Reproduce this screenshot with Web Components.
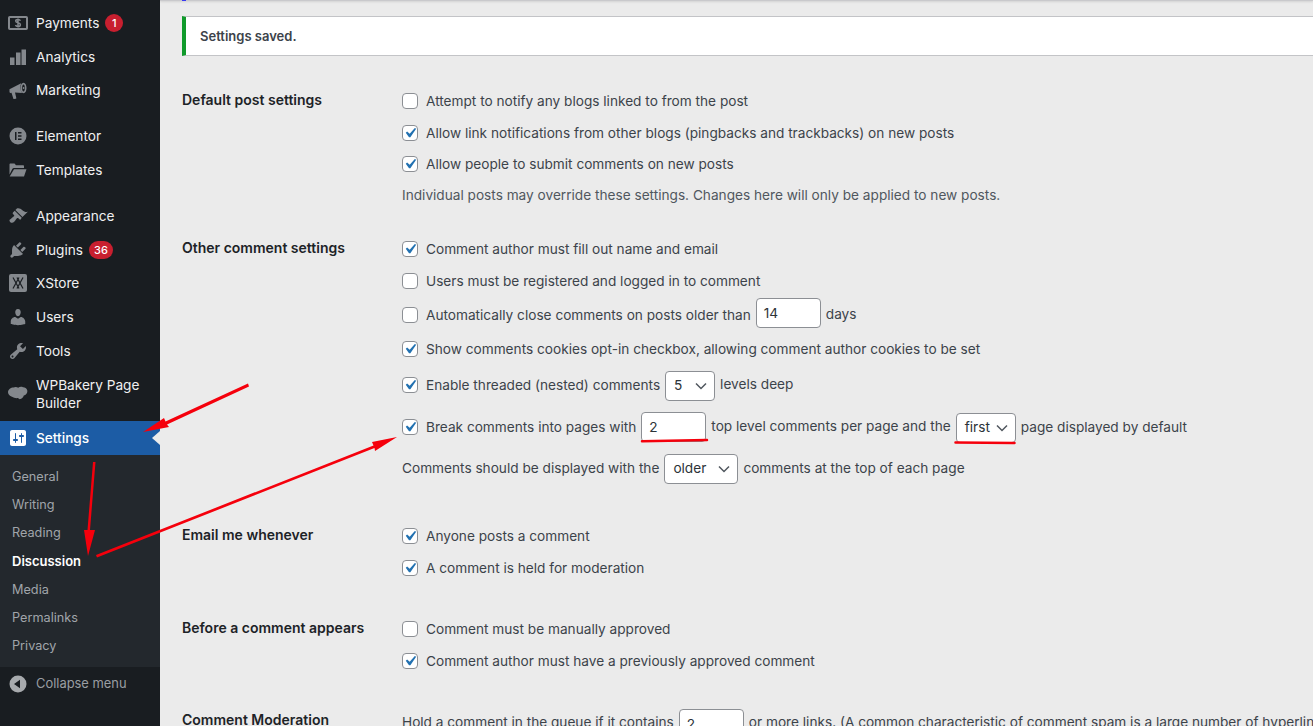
<!DOCTYPE html>
<html lang="en">
<head>
<meta charset="utf-8">
<title>Discussion Settings</title>
<style>
  html, body { margin: 0; height: 100%; overflow: hidden; background: #ebebeb; }
  body { font: 13.650px/1.4 Inter, "Liberation Sans", sans-serif; color: #3c434a; }
  .up { margin-bottom: 2px; }
  .up-field { margin-bottom: 6px; }
  .down-field { margin-top: 2px; }
</style>
</head>
<body>

<wp-admin>
  <wp-sidebar slot="side">
    <wp-menu-item icon="payments" badge="1">Payments</wp-menu-item>
    <wp-menu-item icon="analytics">Analytics</wp-menu-item>
    <wp-menu-item icon="marketing">Marketing</wp-menu-item>
    <wp-menu-sep></wp-menu-sep>
    <wp-menu-item icon="elementor">Elementor</wp-menu-item>
    <wp-menu-item icon="templates">Templates</wp-menu-item>
    <wp-menu-sep></wp-menu-sep>
    <wp-menu-item icon="appearance">Appearance</wp-menu-item>
    <wp-menu-item icon="plugins" badge="36">Plugins</wp-menu-item>
    <wp-menu-item icon="xstore">XStore</wp-menu-item>
    <wp-menu-item icon="users">Users</wp-menu-item>
    <wp-menu-item icon="tools">Tools</wp-menu-item>
    <wp-menu-item icon="bakery" tall>WPBakery Page Builder</wp-menu-item>
    <wp-menu-item icon="settings" current>Settings</wp-menu-item>
    <wp-submenu>
      <wp-submenu-item>General</wp-submenu-item>
      <wp-submenu-item>Writing</wp-submenu-item>
      <wp-submenu-item>Reading</wp-submenu-item>
      <wp-submenu-item current>Discussion</wp-submenu-item>
      <wp-submenu-item>Media</wp-submenu-item>
      <wp-submenu-item>Permalinks</wp-submenu-item>
      <wp-submenu-item>Privacy</wp-submenu-item>
    </wp-submenu>
    <wp-menu-item icon="collapse" dim>Collapse menu</wp-menu-item>
  </wp-sidebar>

  <wp-notice>Settings saved.</wp-notice>

  <wp-section label="Default post settings" style="margin-top:29px">
    <wp-line box>Attempt to notify any blogs linked to from the post</wp-line>
    <wp-line box checked>Allow link notifications from other blogs (pingbacks and trackbacks) on new posts</wp-line>
    <wp-line box checked style="--h:30px">Allow people to submit comments on new posts</wp-line>
    <wp-line style="--h:31px;--c:#50575e">Individual posts may override these settings. Changes here will only be applied to new posts.</wp-line>
  </wp-section>

  <wp-section label="Other comment settings" style="margin-top:23px">
    <wp-line box checked>Comment author must fill out name and email</wp-line>
    <wp-line box>Users must be registered and logged in to comment</wp-line>
    <wp-line box style="--h:36px">Automatically close comments on posts older than <wp-field w="65" class="up-field">14</wp-field> <span class="up">days</span></wp-line>
    <wp-line box checked>Show comments cookies opt-in checkbox, allowing comment author cookies to be set</wp-line>
    <wp-line box checked style="--h:40px">Enable threaded (nested) comments <wp-select w="50">5</wp-select> <span class="up">levels deep</span></wp-line>
    <wp-line box checked style="--h:44px">Break comments into pages with <wp-field w="65" class="up">2</wp-field> <span class="up">top level comments per page and the</span> <wp-select w="60">first</wp-select> page displayed by default</wp-line>
    <wp-line style="--h:38px">Comments should be displayed with the <wp-select w="74">older</wp-select> comments at the top of each page</wp-line>
  </wp-section>

  <wp-section label="Email me whenever" style="margin-top:33px">
    <wp-line box checked>Anyone posts a comment</wp-line>
    <wp-line box checked>A comment is held for moderation</wp-line>
  </wp-section>

  <wp-section label="Before a comment appears" style="margin-top:29px">
    <wp-line box>Comment must be manually approved</wp-line>
    <wp-line box checked>Comment author must have a previously approved comment</wp-line>
  </wp-section>

  <wp-section label="Comment Moderation" style="margin-top:25px;--label-top:3px">
    <wp-line style="--h:40px">Hold a comment in the queue if it contains <wp-field w="65" class="down-field">2</wp-field> or more links. (A common characteristic of comment spam is a large number of hyperlinks.)</wp-line>
  </wp-section>

  <wp-annotations slot="over"></wp-annotations>
</wp-admin>

<script>
const ICONS = {
  payments: `<svg viewBox="0 0 20 14" style="height:14px"><rect x="1" y="1" width="18" height="12" rx=".8" fill="none" stroke="currentColor" stroke-width="2"/><path d="M12.400 4.800c-.3-.8-1.200-1.300-2.400-1.300-1.300 0-2.300.6-2.300 1.600 0 2.300 4.700 1.100 4.700 3.600 0 1.100-1.100 1.800-2.400 1.800-1.200 0-2.200-.5-2.500-1.400M10 2.400v9.200" fill="none" stroke="currentColor" stroke-width="1.500"/></svg>`,
  analytics: `<svg viewBox="0 0 20 20"><path d="M2 10.500h4.500V18H2zM8 5.500h4.500V18H8zM13.500 2.500H18V18h-4.500z" fill="currentColor"/></svg>`,
  marketing: `<svg viewBox="0 0 20 20"><path fill="currentColor" d="M1.500 9.300 13.200 3.300c-1.200 2.400-1.100 7 .9 9.700L7 12.400l1.300 5.600c.1.400-.1.600-.5.700l-1.800.3c-.4.1-.6-.1-.7-.5L3.500 12.800l-1 .1c-.6.1-1-.2-1-.8z"/><path fill="currentColor" fill-rule="evenodd" d="M15.500 2.800c1.800 0 3 2.300 3 5.200s-1.200 5.200-3 5.200-3-2.300-3-5.200 1.200-5.200 3-5.200zm0 1.700c-.8 0-1.400 1.600-1.400 3.500s.6 3.500 1.400 3.500 1.400-1.600 1.400-3.500-.6-3.500-1.400-3.500z"/><circle cx="15.600" cy="8" r=".9" fill="currentColor"/></svg>`,
  elementor: `<svg viewBox="0 0 20 20"><path fill="currentColor" fill-rule="evenodd" d="M10 1.500a8.500 8.500 0 1 0 0 17 8.500 8.500 0 0 0 0-17zM7 6h1.500v8H7zm3 0h3.500v1.500H10zm0 3.250h3.500v1.500H10zm0 3.250h3.500V14H10z"/></svg>`,
  templates: `<svg viewBox="0 0 20 20"><path fill="currentColor" d="M1.500 4.500c0-.6.400-1 1-1h4l1.500 1.800h7c.6 0 1 .4 1 1V8H6c-.8 0-1.400.4-1.700 1.100L1.500 14.500z"/><path fill="currentColor" d="M6 9.200h12.500L16 16.500H1.700z"/></svg>`,
  appearance: `<svg viewBox="0 0 20 20"><path fill="currentColor" d="M14.480 11.060 7.410 3.990l1.500-1.500c.5-.56 2.300-.47 3.510.32 1.210.8 1.430 1.280 2.910 2.100 1.180.64 2.450 1.260 4.450.85zm-.71.71L6.700 4.700 4.930 6.470c-.39.39-.39 1.020 0 1.410l1.060 1.060c.39.39.39 1.030 0 1.420-.6.6-1.430 1.110-2.210 1.690-.35.26-.7.53-1.010.84C1.430 13.230 1 14.530 2.100 15.900c.1.100.2.2.3.3 1.370 1.100 2.670.67 4.010-.67.31-.31.58-.66.84-1.010.58-.78 1.090-1.610 1.690-2.210.39-.39 1.030-.39 1.420 0l1.060 1.060c.39.39 1.020.39 1.410 0z"/></svg>`,
  plugins: `<svg viewBox="0 0 20 20"><path fill="currentColor" d="M13.110 4.360 9.870 7.600 8 5.730l3.240-3.240c.35-.34 1.050-.2 1.560.32.52.51.66 1.210.31 1.550zm-8 1.770.91-1.120 9.010 9.010-1.190.84c-.71.71-2.630 1.160-3.820 1.160H6.140L4.900 17.260c-.59.59-1.540.59-2.120 0-.59-.58-.59-1.530 0-2.120l1.240-1.240v-3.880c0-1.130.4-3.190 1.090-3.890zm7.260 3.970 3.240-3.240c.34-.35 1.040-.21 1.550.31.52.51.66 1.210.31 1.550l-3.240 3.250z"/></svg>`,
  xstore: `<svg viewBox="0 0 20 20"><rect x="1" y="1" width="18" height="18" rx="2" fill="currentColor"/><path d="M5 4.500l6 11M11 4.500l-6 11M9 4.500l6 11M15 4.500l-6 11" stroke="#1a1e22" stroke-width="1.200" fill="none"/></svg>`,
  users: `<svg viewBox="0 0 20 20"><path fill="currentColor" d="M10 9.250c-2.270 0-2.730-3.440-2.730-3.440C7 4.020 7.820 2 9.970 2c2.160 0 2.980 2.020 2.710 3.810 0 0-.41 3.440-2.680 3.440zm0 2.570L12.720 10c2.390 0 4.520 2.330 4.520 4.530v2.490s-3.650 1.130-7.240 1.130c-3.650 0-7.240-1.130-7.240-1.130v-2.490c0-2.250 1.940-4.480 4.470-4.480z"/></svg>`,
  tools: `<svg viewBox="0 0 20 20"><path fill="currentColor" d="M16.680 9.770c-1.340 1.340-3.300 1.670-4.950.99l-5.410 6.520c-.99.99-2.590.99-3.580 0s-.99-2.59 0-3.570l6.520-5.420c-.68-1.650-.35-3.610.99-4.950 1.280-1.280 3.120-1.620 4.720-1.060l-2.890 2.890 2.820 2.820 2.860-2.870c.53 1.580.18 3.390-1.080 4.650zM3.810 16.210c.4.390 1.040.39 1.430 0 .4-.4.4-1.040 0-1.430-.39-.4-1.030-.4-1.430 0-.39.39-.39 1.030 0 1.430z"/></svg>`,
  bakery: `<svg viewBox="0 0 20 20"><path fill="currentColor" d="M5.500 3.500c1.500-.8 3.300-.7 4.700.2 1.300-1 3.200-1.200 4.800-.5 1.300-.2 3.800.9 4.300 3.300.4 2.400-1.300 4.500-3.500 4.900-.5 1.800-1.800 3-3.300 3.600-.9.400-1.800-.1-2.500-.9-2.200.3-4.400-.2-6-1.300C1.500 12-.1 10.200 0 7.900.2 5.500 2.800 3.500 5.500 3.500z"/></svg>`,
  settings: `<svg viewBox="0 0 20 20"><path fill="currentColor" d="M18 16V4c0-1.100-.9-2-2-2H4c-1.100 0-2 .9-2 2v12c0 1.100.9 2 2 2h12c1.100 0 2-.9 2-2zM8 11h1c.55 0 1 .45 1 1s-.45 1-1 1H8v1.500c0 .28-.22.5-.5.5s-.5-.22-.5-.5V13H6c-.55 0-1-.45-1-1s.45-1 1-1h1V5.500c0-.28.22-.5.5-.5s.5.22.5.5V11zm5-2h-1c-.55 0-1-.45-1-1s.45-1 1-1h1V5.500c0-.28.22-.5.5-.5s.5.22.5.5V7h1c.55 0 1 .45 1 1s-.45 1-1 1h-1v5.500c0 .28-.22.5-.5.5s-.5-.22-.5-.5V9z"/></svg>`,
  collapse: `<svg viewBox="0 0 20 20"><path fill="currentColor" d="M10 1.500a8.500 8.500 0 1 0 0 17 8.500 8.500 0 0 0 0-17zm2 12.700L6 10l6-4.200z"/></svg>`
}

class WpAdmin extends HTMLElement {
  constructor () {
    super()
    this.attachShadow({ mode: 'open' }).innerHTML = `
      <style>
        :host { display: flex; height: 726px; overflow: hidden; position: relative; }
        .side { flex: 0 0 160px; }
        main { flex: 1; min-width: 0; padding: 16px 0 0 22px; position: relative; }
        .top { position: absolute; left: 0; right: 0; top: 0; height: 1px; background: #c9c9cc; box-shadow: 0 1px 2px rgba(0,0,0,.15); }
        .top::before { content: ""; position: absolute; left: 22px; top: 0; width: 4px; height: 1px; background: #3a3af0; }
      </style>
      <div class="side"><slot name="side"></slot></div>
      <main><div class="top"></div><slot></slot></main>
      <slot name="over"></slot>`
  }
}

class WpSidebar extends HTMLElement {
  constructor () {
    super()
    this.attachShadow({ mode: 'open' }).innerHTML = `
      <style>
        :host { display: block; height: 726px; padding-top: 6px; box-sizing: border-box; background: #191d21; }
      </style>
      <slot></slot>`
  }
}

class WpMenuItem extends HTMLElement {
  constructor () {
    super()
    const badge = this.getAttribute('badge')
    this.attachShadow({ mode: 'open' }).innerHTML = `
      <style>
        :host { display: flex; align-items: center; box-sizing: border-box; height: 33.800px; color: #f0f0f1; font-size: 13.650px; line-height: 18px; position: relative; }
        :host([tall]) { height: 53px; }
        :host([current]) { height: 34px; background: #1c5ca5; color: #fff; font-weight: 500; }
        :host([current])::after { content: ""; position: absolute; right: 0; top: 10px; border: 7px solid transparent; border-right: 8px solid #ebebeb; border-left: 0; }
        :host([dim]) { color: #9a9ea3; font-size: 12.900px; height: 34px; }
        .icon { flex: 0 0 36px; display: flex; justify-content: center; color: #84888d; }
        :host([current]) .icon { color: #fff; }
        :host([dim]) .icon { color: #a7aaad; }
        .icon svg { width: 20px; height: 20px; }
        .badge { margin-left: 6px; min-width: 18px; height: 18px; padding: 0 5px; box-sizing: border-box; border-radius: 9px; background: #c81f2f; color: #fff; font-size: 11px; font-weight: 500; line-height: 18px; text-align: center; }
        :host([badge="1"]) .badge { padding: 0; }
      </style>
      <span class="icon">${ICONS[this.getAttribute('icon')] || ''}</span>
      <span class="label"><slot></slot></span>
      ${badge ? `<span class="badge">${badge}</span>` : ''}`
  }
}

class WpMenuSep extends HTMLElement {
  constructor () {
    super()
    this.attachShadow({ mode: 'open' }).innerHTML = '<style>:host { display: block; height: 12px; }</style>'
  }
}

class WpSubmenu extends HTMLElement {
  constructor () {
    super()
    this.attachShadow({ mode: 'open' }).innerHTML = `
      <style>:host { display: block; height: 212px; box-sizing: border-box; padding-top: 8px; background: #23282d; }</style>
      <slot></slot>`
  }
}

class WpSubmenuItem extends HTMLElement {
  constructor () {
    super()
    this.attachShadow({ mode: 'open' }).innerHTML = `
      <style>
        :host { display: block; height: 28.170px; padding-left: 12px; color: #a0a5aa; font-size: 12.700px; line-height: 28.170px; }
        :host([current]) { color: #fff; font-size: 13px; font-weight: 600; }
      </style>
      <slot></slot>`
  }
}

class WpNotice extends HTMLElement {
  constructor () {
    super()
    this.attachShadow({ mode: 'open' }).innerHTML = `
      <style>
        :host { display: flex; align-items: center; height: 40px; box-sizing: border-box; background: #fff; border-left: 4px solid #109a2b; border-top: 1px solid #c3c4c7; border-bottom: 1px solid #c3c4c7; padding-left: 14px; color: #3c434a; font-size: 13px; font-weight: 600; }
      </style>
      <slot></slot>`
  }
}

class WpSection extends HTMLElement {
  constructor () {
    super()
    this.attachShadow({ mode: 'open' }).innerHTML = `
      <style>
        :host { display: grid; grid-template-columns: 220px 1fr; }
        .label { height: 30px; margin-top: var(--label-top, 0); line-height: 30px; color: #1d2327; font-size: 14px; font-weight: 600; white-space: nowrap; }
        .body { min-width: 0; }
      </style>
      <div class="label">${this.getAttribute('label')}</div>
      <div class="body"><slot></slot></div>`
  }
}

class WpLine extends HTMLElement {
  constructor () {
    super()
    const box = this.hasAttribute('box')
    const checked = this.hasAttribute('checked')
    this.attachShadow({ mode: 'open' }).innerHTML = `
      <style>
        :host { display: flex; align-items: center; gap: 5px; box-sizing: border-box; height: var(--h, 32px); padding-top: 2px; white-space: nowrap; color: var(--c, #3c434a); font-size: 13.650px; }
        .box { flex: 0 0 16px; width: 16px; height: 16px; box-sizing: border-box; margin: 0 3px 2px 0; background: #fff; border: 1px solid #8c8f94; border-radius: 4px; position: relative; }
        .box svg { position: absolute; left: -3px; top: -3px; width: 20px; height: 20px; }
      </style>
      ${box ? `<span class="box">${checked ? '<svg viewBox="0 0 20 20"><path fill="#2271b1" d="M14.830 4.890l1.340.94-5.810 8.380H9.020L5.780 9.670l1.340-1.250 2.570 2.400z"/></svg>' : ''}</span>` : ''}
      <slot></slot>`
  }
}

class WpField extends HTMLElement {
  constructor () {
    super()
    this.attachShadow({ mode: 'open' }).innerHTML = `
      <style>
        :host { display: block; flex: none; box-sizing: border-box; width: ${this.getAttribute('w')}px; height: 30px; padding: 0 7px; background: #fff; border: 1px solid #8c8f94; border-radius: 4px; color: #2c3338; line-height: 28px; }
      </style>
      <slot></slot>`
  }
}

class WpSelect extends HTMLElement {
  constructor () {
    super()
    this.attachShadow({ mode: 'open' }).innerHTML = `
      <style>
        :host { display: flex; flex: none; align-items: center; justify-content: space-between; box-sizing: border-box; width: ${this.getAttribute('w')}px; height: 30px; padding: 0 7px 0 8px; background: #fff; border: 1px solid #8c8f94; border-radius: 4px; color: #2c3338; }
        svg { width: 12px; height: 8px; flex: none; }
      </style>
      <span><slot></slot></span>
      <svg viewBox="0 0 12 8"><path d="M1 1.500 6 6.500l5-5" fill="none" stroke="#50575e" stroke-width="1.500"/></svg>`
  }
}

class WpAnnotations extends HTMLElement {
  constructor () {
    super()
    this.attachShadow({ mode: 'open' }).innerHTML = `
      <style>
        :host { position: absolute; inset: 0; pointer-events: none; }
        svg { display: block; width: 100%; height: 100%; }
      </style>
      <svg viewBox="0 0 1313 726">
        <g fill="#f5000c" stroke="none">
          <path d="M143 432 164 418 165.500 421.500 248 383.500 249 386.500 167 424.500 169 427z"/>
          <path d="M93 462h2.500L90 530 95 530 88 556 84 530 87.500 530z"/>
          <path d="M397 437 372 442 373.500 445.500 96 555 97 557.500 374.500 448 375 451z"/>
        </g>
        <g fill="none" stroke="#f5000c" stroke-width="2.500" stroke-linecap="round">
          <path d="M642 441.300 707 440"/>
          <path d="M955.500 442.500 1014.500 443"/>
        </g>
      </svg>`
  }
}

customElements.define('wp-admin', WpAdmin)
customElements.define('wp-sidebar', WpSidebar)
customElements.define('wp-menu-item', WpMenuItem)
customElements.define('wp-menu-sep', WpMenuSep)
customElements.define('wp-submenu', WpSubmenu)
customElements.define('wp-submenu-item', WpSubmenuItem)
customElements.define('wp-notice', WpNotice)
customElements.define('wp-section', WpSection)
customElements.define('wp-line', WpLine)
customElements.define('wp-field', WpField)
customElements.define('wp-select', WpSelect)
customElements.define('wp-annotations', WpAnnotations)
</script>
</body>
</html>
